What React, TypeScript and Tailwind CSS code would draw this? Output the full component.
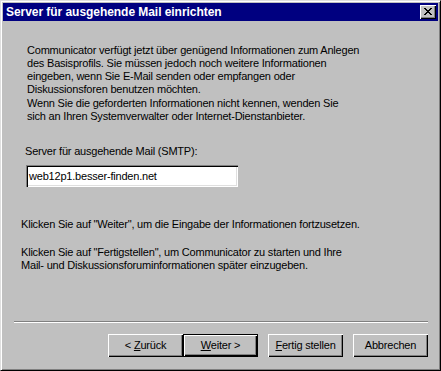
import React from 'react';

const font = "font-['Liberation_Sans',Arial,sans-serif]";

function Btn({ children, isDefault }: { children: React.ReactNode; isDefault?: boolean }) {
  return (
    <div className={isDefault ? 'border border-black' : ''}>
      <div
        className={
          'flex items-center justify-center bg-[#c0c0c0] text-[11px] leading-[13px] text-black tracking-[-0.2px] ' +
          (isDefault
            ? 'w-[73px] h-[21px] shadow-[inset_1px_1px_0_#ffffff,inset_-1px_-1px_0_#000000,inset_-2px_-2px_0_#808080]'
            : 'w-[75px] h-[23px] shadow-[inset_1px_1px_0_#ffffff,inset_-1px_-1px_0_#000000,inset_-2px_-2px_0_#808080]')
        }
      >
        {children}
      </div>
    </div>
  );
}

export default function App() {
  return (
    <div className={`w-[441px] h-[371px] ${font} text-black`}>
      <div className="w-full h-full flex flex-col bg-[#c0c0c0] border border-t-[#dfdfdf] border-l-[#dfdfdf] border-r-black border-b-black p-[2px] shadow-[inset_1px_1px_0_#ffffff,inset_-1px_-1px_0_#808080]">
        {/* title bar */}
        <div className="h-[18px] bg-[#000080] flex items-center justify-between pl-[3px] pr-[2px]">
          <span className="text-white text-[12px] font-bold leading-[14px] tracking-[-0.05px]">
            Server für ausgehende Mail einrichten
          </span>
          <div className="w-[16px] h-[14px] bg-[#c0c0c0] flex items-center justify-center shadow-[inset_1px_1px_0_#ffffff,inset_-1px_-1px_0_#000000,inset_-2px_-2px_0_#808080]">
            <svg width="8" height="7" viewBox="0 0 8 7" shapeRendering="crispEdges" className="-mt-[1px]">
              <path
                d="M0 0h2v1H0zM6 0h2v1H6zM1 1h2v1H1zM5 1h2v1H5zM2 2h4v1H2zM3 3h2v1H3zM2 4h4v1H2zM1 5h2v1H1zM5 5h2v1H5zM0 6h2v1H0zM6 6h2v1H6z"
                fill="#000"
              />
            </svg>
          </div>
        </div>

        {/* body */}
        <div className="flex flex-col text-[11px] leading-[13px] tracking-[-0.2px] flex-1">
          <p className="mt-[23px] ml-[24px]">
            Communicator verfügt jetzt über genügend Informationen zum Anlegen
            <br />
            des Basisprofils. Sie müssen jedoch noch weitere Informationen
            <br />
            eingeben, wenn Sie E-Mail senden oder empfangen oder
            <br />
            Diskussionsforen benutzen möchten.
          </p>
          <p className="mt-[1px] ml-[24px]">
            Wenn Sie die geforderten Informationen nicht kennen, wenden Sie
            <br />
            sich an Ihren Systemverwalter oder Internet-Dienstanbieter.
          </p>

          <p className="mt-[22px] ml-[22px]">Server für ausgehende Mail (SMTP):</p>
          <div className="mt-[7px] ml-[23px] w-[212px] h-[22px] bg-white flex items-center pl-[3px] shadow-[inset_1px_1px_0_#808080,inset_2px_2px_0_#000000,inset_-1px_-1px_0_#ffffff,inset_-2px_-2px_0_#dfdfdf]">
            web12p1.besser-finden.net
          </div>

          <p className="mt-[31px] ml-[18px]">
            Klicken Sie auf "Weiter", um die Eingabe der Informationen fortzusetzen.
          </p>
          <p className="mt-[15px] ml-[18px]">
            Klicken Sie auf "Fertigstellen", um Communicator zu starten und Ihre
            <br />
            Mail- und Diskussionsforuminformationen später einzugeben.
          </p>

          {/* footer */}
          <div className="mt-auto pb-[11px]">
            <div className="ml-[11px] mr-[10px] h-[2px] border-t border-t-[#808080] border-b border-b-white" />
            <div className="mt-[11px] flex justify-end pr-[10px]">
              <Btn>
                &lt; <span className="underline ml-[3px]">Z</span>urück
              </Btn>
              <Btn isDefault>
                <span className="underline">W</span>eiter &gt;
              </Btn>
              <div className="w-[10px]" />
              <Btn>
                <span className="underline">F</span>ertig stellen
              </Btn>
              <div className="w-[10px]" />
              <Btn>Abbrechen</Btn>
            </div>
          </div>
        </div>
      </div>
    </div>
  );
}
